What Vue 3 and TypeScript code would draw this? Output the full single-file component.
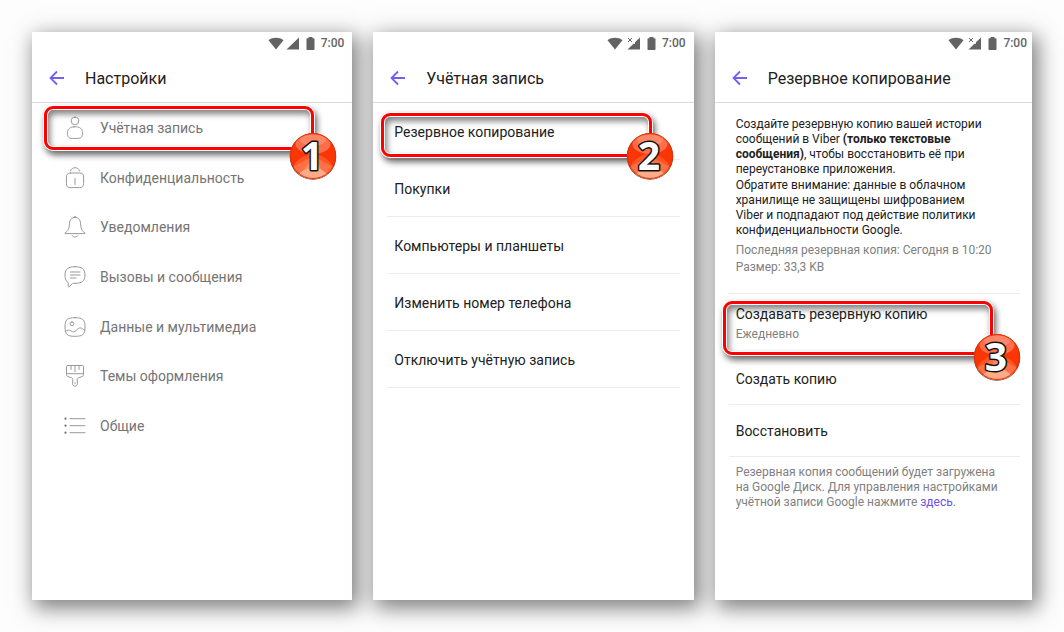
<script setup lang="ts">
type IconName = 'person' | 'lock' | 'bell' | 'chat' | 'image' | 'brush' | 'list'

interface SettingsItem {
  label: string
  icon: IconName
}

const settings: SettingsItem[] = [
  { label: 'Учётная запись', icon: 'person' },
  { label: 'Конфиденциальность', icon: 'lock' },
  { label: 'Уведомления', icon: 'bell' },
  { label: 'Вызовы и сообщения', icon: 'chat' },
  { label: 'Данные и мультимедиа', icon: 'image' },
  { label: 'Темы оформления', icon: 'brush' },
  { label: 'Общие', icon: 'list' },
]

const iconPaths: Record<IconName, string> = {
  person:
    'M12 1.200a3.800 3.800 0 1 0 0 7.600a3.800 3.800 0 0 0 0-7.600zM11 10.800h2c3.900 0 6.600 2.400 6.600 6.200c0 4-1.400 5.400-5 5.400h-5.200c-3.600 0-5-1.400-5-5.400c0-3.800 2.700-6.200 6.600-6.200z',
  lock: 'M7.500 7h9c2.800 0 4.100 1.300 4.100 4.100v6.400c0 2.800-1.300 4.100-4.100 4.100h-9c-2.800 0-4.100-1.300-4.100-4.100v-6.400c0-2.800 1.300-4.100 4.100-4.100zM7.600 4.900c.5-2 2.200-3.200 4.400-3.200c2.400 0 4 1.100 4.400 3.200M12 12.500v6',
  bell: 'M12 2.400c3.600 0 5.300 2.500 5.500 5.700c.3 5.200 1.300 8.200 4.300 9.600c.5.300.4.900-.2.900h-19.200c-.6 0-.7-.6-.2-.9c3-1.400 4-4.400 4.300-9.600c.2-3.200 1.900-5.700 5.500-5.700zM10.700 2.500c0-1.700 2.600-1.700 2.600 0M9.200 20.700c.7 1.900 4.900 1.900 5.600 0',
  chat: 'M12 1.700c6.800 0 10 2.300 10 8.300c0 6.300-3.400 8.300-10 8.300c-1 0-1.700 0-2.300.1l-3.500 3.200c-.6.500-1 .3-1-.4v-3.600c-2.200-1.200-3.200-3.500-3.200-7.600c0-6 3.200-8.300 10-8.300zM7.500 7h9.500M7.500 10h9.500M7.500 13h5.500',
  image:
    'M12 2.700c7.800 0 10 1.800 10 9.300s-2.200 9.300-10 9.300s-10-1.800-10-9.300s2.200-9.300 10-9.300zM9 6.900a1.900 1.900 0 1 0 0 3.800a1.900 1.900 0 0 0 0-3.800zM2.300 16.500c3-2.200 4.200-1.300 5.700-.5c2.300 1.300 3.400 1.200 5.200-.6c1.700-1.700 2.700-2.500 4.100-2.500c1.600 0 2.500 1.500 4.500 2.200',
  brush:
    'M4.700 1.500h14.600c.8 0 1.200.4 1.200 1.200v8c0 1.100-.6 1.700-1.700 2l-3.300 1c-1.200.4-1.400 1.100-1.300 2l.3 3.700c.2 3.700-5.200 3.700-5 0l.3-3.700c.1-.9-.1-1.600-1.300-2l-3.300-1c-1.100-.3-1.700-.9-1.700-2v-8c0-.8.4-1.200 1.200-1.200zM3.500 9.700h17M8 1.500v4M12 1.500v6M16 1.500v4M12 18.500v1.200',
  list: 'M7 4.700h15M7 11.700h15M7 18.700h15',
}

const accountItems: string[] = [
  'Резервное копирование',
  'Покупки',
  'Компьютеры и планшеты',
  'Изменить номер телефона',
  'Отключить учётную запись',
]

interface Screen {
  title: string
  step: number
  noSim: boolean
}

const screens: Screen[] = [
  { title: 'Настройки', step: 1, noSim: false },
  { title: 'Учётная запись', step: 2, noSim: true },
  { title: 'Резервное копирование', step: 3, noSim: true },
]
</script>

<template>
  <main class="board">
    <section v-for="screen in screens" :key="screen.step" class="phone">
      <div :class="['status', { compact: screen.step === 3 }]">
        <svg viewBox="0 0 16 13" width="16" height="13" aria-hidden="true">
          <path d="M.5 3.200C5 0 11 0 15.500 3.200L8 12.500z" fill="#636363" />
        </svg>
        <svg :class="['signal', { spaced: screen.noSim }]" viewBox="0 0 14 13" width="14" height="13" aria-hidden="true">
          <path v-if="!screen.noSim" d="M13 .5v12H.500z" fill="#636363" />
          <template v-else>
            <path d="M13 .5v12H.500l6-5.800h1.500V5.200z" fill="#636363" />
            <path d="M1 1l4 4M5 1l-4 4" stroke="#636363" fill="none" />
          </template>
        </svg>
        <svg class="battery" viewBox="0 0 9 13" width="9" height="13" aria-hidden="true">
          <path d="M2.500 0h4v1.200h1.300q.7 0 .7.700v10.400q0 .7-.7.700H1.200q-.7 0-.7-.7V1.900q0-.7.7-.7h1.300z" fill="#636363" />
        </svg>
        <span>7:00</span>
      </div>

      <header class="bar">
        <button type="button" class="back" aria-label="Назад">
          <svg viewBox="0 0 16 16" width="16" height="16" aria-hidden="true">
            <path d="M15 8H2M8 1.500L1.500 8L8 14.500" fill="none" stroke="#7360f2" stroke-width="1.800" />
          </svg>
        </button>
        <h1>{{ screen.title }}</h1>
      </header>

      <nav v-if="screen.step === 1" class="settings">
        <button v-for="(item, i) in settings" :key="item.icon" type="button" class="setting">
          <svg viewBox="0 0 24 24" width="24" height="24" aria-hidden="true">
            <path :d="iconPaths[item.icon]" fill="none" stroke="#999" stroke-linecap="round" stroke-linejoin="round" />
            <g v-if="item.icon === 'list'" fill="#707070">
              <circle cx="2.500" cy="4.700" r="1.100" />
              <circle cx="2.500" cy="11.700" r="1.100" />
              <circle cx="2.500" cy="18.700" r="1.100" />
            </g>
          </svg>
          <span>{{ item.label }}</span>
          <span v-if="i === 0" class="callout callout-1" />
        </button>
      </nav>

      <nav v-else-if="screen.step === 2" class="rows">
        <button v-for="(label, i) in accountItems" :key="label" type="button" class="row tall">
          {{ label }}
          <span v-if="i === 0" class="callout callout-2" />
        </button>
      </nav>

      <div v-else class="rows backup">
        <div class="info">
          <p>
            Создайте резервную копию вашей истории сообщений в Viber
            <b>(только текстовые сообщения)</b>, чтобы восстановить её при переустановке приложения.
          </p>
          <p>
            Обратите внимание: данные в облачном хранилище не защищены шифрованием Viber и подпадают под действие
            политики конфиденциальности Google.
          </p>
          <p class="muted last">Последняя резервная копия: Сегодня в 10:20</p>
          <p class="muted size">Размер: 33,3 KB</p>
        </div>
        <button type="button" class="row schedule">
          <span>Создавать резервную копию</span>
          <small>Ежедневно</small>
          <span class="callout callout-3" />
        </button>
        <button type="button" class="row">Создать копию</button>
        <button type="button" class="row">Восстановить</button>
        <p class="note muted">
          Резервная копия сообщений будет загружена на Google Диск. Для управления настройками учётной записи Google
          нажмите <a href="#">здесь</a>.
        </p>
      </div>

      <svg :class="['badge', 'badge-' + screen.step]" viewBox="0 0 48 48" width="48" height="48">
        <defs>
          <clipPath :id="'disc' + screen.step"><circle cx="24" cy="24" r="23" /></clipPath>
        </defs>
        <circle cx="24" cy="24.500" r="23.300" fill="#6d5148" />
        <g :clip-path="'url(#disc' + screen.step + ')'">
          <circle cx="24" cy="24" r="23" fill="#fb3605" />
          <ellipse cx="24" cy="50" rx="24" ry="28" fill="#ff5526" />
          <path d="M24 24L2 36L10 48H38L46 36z" fill="#ff7045" />
          <path d="M24 24L9 48H39z" fill="#ff8c63" />
          <ellipse cx="24" cy="46" rx="15" ry="10" fill="#ffab87" />
          <ellipse cx="24" cy="12" rx="17.500" ry="10" fill="#ff6e49" />
          <ellipse cx="24" cy="8" rx="13" ry="5.500" fill="#ff8767" />
        </g>
        <circle cx="24" cy="24" r="22.500" fill="none" stroke="#e53005" />
        <text x="23" y="38" text-anchor="middle">{{ screen.step }}</text>
      </svg>
    </section>
  </main>
</template>

<style>
body {
  margin: 0;
  background: #fdfdfd;
}
</style>

<style scoped>
.board {
  box-sizing: border-box;
  min-height: 100vh;
  padding: 32px;
  display: grid;
  grid-template-columns: 320fr 320fr 317fr;
  gap: 21px;
  font-family: Roboto, "Liberation Sans", sans-serif;
  color: #212121;
}

.phone {
  position: relative;
  min-width: 0;
  background: #fff;
  box-shadow: 4px 6px 20px 2px rgba(0, 0, 0, 0.5);
}

.status {
  height: 22px;
  padding-right: 8px;
  display: flex;
  align-items: center;
  justify-content: flex-end;
  font-size: 12px;
  font-weight: 500;
  color: #636363;
}

.compact {
  padding-right: 5px;
}

.signal {
  margin-left: 2px;
}

.spaced {
  margin-left: 4px;
}

.battery {
  margin: 0 6px;
}

button {
  border: 0;
  padding: 0;
  background: none;
  font: inherit;
  color: inherit;
  text-align: left;
}

.bar {
  height: 48px;
  padding-left: 17px;
  display: flex;
  align-items: center;
  gap: 20px;
  border-bottom: 1px solid #d9d9d9;
}

.back,
.back svg {
  display: block;
}

h1 {
  margin: 0;
  font-size: 16px;
  line-height: 20px;
  padding-top: 2px;
  font-weight: 400;
}

.settings {
  height: 348px;
  display: flex;
  flex-direction: column;
}

.setting {
  position: relative;
  flex: 1;
  padding-left: 31px;
  display: flex;
  align-items: center;
  gap: 13px;
  font-size: 14px;
  color: #757575;
}

.rows {
  display: flex;
  flex-direction: column;
  padding: 0 14px;
}

.backup {
  padding-right: 12px;
}

.row {
  position: relative;
  box-sizing: border-box;
  height: 52px;
  padding-left: 7px;
  border-bottom: 1px solid #ececec;
  font-size: 14px;
}

.tall {
  height: 57px;
  padding-top: 2px;
}

.schedule {
  height: 59px;
  padding-top: 4px;
  display: flex;
  flex-direction: column;
  justify-content: center;
  gap: 2px;
}

small {
  font-size: 12px;
  line-height: 20px;
  color: #808080;
}

p {
  margin: 0;
  font-size: 12px;
  line-height: 15px;
}

.info {
  padding: 14px 26px 18px 7px;
  display: flex;
  flex-direction: column;
  gap: 1px;
  border-bottom: 1px solid #ececec;
}

.last {
  margin-top: 4px;
}

.size {
  margin-top: 1px;
}

.muted {
  color: #808080;
}

b {
  font-weight: 700;
}

.note {
  padding: 8px 12px 8px 7px;
}

a {
  color: #6b51e8;
  text-decoration: none;
}

.callout {
  position: absolute;
  box-sizing: border-box;
  border: 3px solid #f00;
  border-radius: 9px;
  box-shadow:
    0 0 0 1px #fff,
    2px 4px 6px 1px rgba(0, 0, 0, 0.6),
    inset 0 0 0 1px #fff,
    inset 2px 4px 6px 1px rgba(0, 0, 0, 0.5);
}

.callout-1 {
  left: 12px;
  right: 38px;
  top: 3px;
  height: 44px;
}

.callout-2 {
  left: -6px;
  right: 28px;
  top: 10px;
  height: 44px;
}

.callout-3 {
  left: -6px;
  right: 27px;
  top: 7px;
  height: 54px;
}

.badge {
  position: absolute;
  overflow: visible;
}

.badge-1 {
  right: 15px;
  top: 100px;
}

.badge-2 {
  right: 20px;
  top: 100px;
}

.badge-3 {
  right: 11px;
  top: 301px;
}

.badge text {
  font-family: "Open Sans", "Noto Sans", sans-serif;
  font-size: 39px;
  font-weight: 700;
  fill: #fff;
  stroke: #111;
  stroke-width: 3px;
  stroke-linejoin: round;
  paint-order: stroke;
}
</style>
